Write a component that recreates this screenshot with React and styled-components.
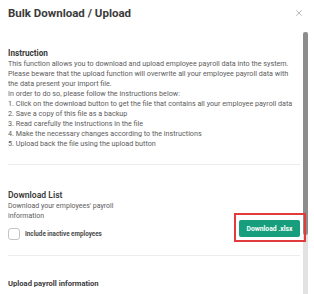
import React from 'react';
import styled, { createGlobalStyle } from 'styled-components';
import { X } from 'lucide-react';

const GlobalStyle = createGlobalStyle`
  html, body {
    margin: 0;
    padding: 0;
    background: #ffffff;
    font-family: Roboto, "Liberation Sans", sans-serif;
  }
`;

const Modal = styled.div`
  width: 314px;
  height: 294px;
  background: #ffffff;
  display: flex;
  flex-direction: column;
  overflow: hidden;
`;

const Header = styled.div`
  height: 32px;
  flex: 0 0 32px;
  display: flex;
  align-items: flex-start;
  justify-content: space-between;
  padding: 6px 10px 0 8px;
  box-sizing: border-box;
`;

const Title = styled.h1`
  margin: 0;
  font-size: 11.5px;
  line-height: 14px;
  font-weight: 700;
  color: #3b3b3b;
`;

const Close = styled.button`
  border: none;
  background: none;
  padding: 0;
  margin-top: 2px;
  display: flex;
  color: #8a8a8a;
  cursor: pointer;
`;

const Content = styled.div`
  flex: 1;
  min-height: 0;
  display: flex;
`;

const Body = styled.div`
  flex: 1;
  min-width: 0;
  padding: 15px 3px 0 8px;
`;

const ScrollTrack = styled.div`
  width: 5px;
  margin-right: 6px;
  background: #e2e2e2;
`;

const ScrollThumb = styled.div`
  height: 203px;
  background: #8c8c8c;
  border-radius: 3px;
`;

const Section = styled.section`
  padding: ${p => p.$pad || '0'};
  border-bottom: ${p => (p.$divider ? '1px solid #ececec' : 'none')};
`;

const Heading = styled.h2`
  margin: 0;
  font-size: ${p => p.$size || '8.2px'};
  line-height: 12px;
  font-weight: ${p => p.$weight || 700};
  color: #3a3a3a;
`;

const Text = styled.p`
  margin: 0;
  font-size: ${p => p.$size || '7px'};
  line-height: 10px;
  color: #5c5c5c;
  white-space: ${p => (p.$nowrap ? 'nowrap' : 'normal')};
`;

const DownloadRow = styled.div`
  display: flex;
  align-items: flex-end;
  justify-content: space-between;
`;

const LeftCol = styled.div`
  width: 120px;
`;

const CheckRow = styled.label`
  display: flex;
  align-items: center;
  gap: 5px;
  margin-top: 7px;
  font-size: 6.3px;
  line-height: 10px;
  font-weight: 700;
  color: #4a4a4a;
`;

const Box = styled.span`
  width: 10px;
  height: 10px;
  border: 1px solid #c4c4c4;
  border-radius: 3px;
  background: #fff;
`;

const ButtonWrap = styled.div`
  position: relative;
  margin-bottom: 3px;

  &::after {
    content: '';
    position: absolute;
    left: -5px;
    right: -6px;
    top: -7px;
    bottom: -5px;
    border: 2px solid #e23b3b;
    pointer-events: none;
  }
`;

const DownloadButton = styled.button`
  display: block;
  width: 61px;
  height: 17px;
  border: none;
  border-radius: 2px;
  background: #179e7c;
  color: #ffffff;
  font-family: Roboto, "Liberation Sans", sans-serif;
  font-size: 6.8px;
  font-weight: 700;
  padding: 0;
  cursor: pointer;
`;

const Spacer = styled.div`
  height: ${p => p.$h}px;
`;

const lines = [
  'This function allows you to download and upload employee payroll data into the system.',
  'Please beware that the upload function will overwrite all your employee payroll data with',
  'the data present your import file.',
  'In order to do so, please follow the instructions below:',
  '1. Click on the download button to get the file that contains all your employee payroll data',
  '2. Save a copy of this file as a backup',
  '3. Read carefully the instructions in the file',
  '4. Make the necessary changes according to the instructions',
  '5. Upload back the file using the upload button',
];

export default function App() {
  return (
    <>
      <GlobalStyle />
      <Modal>
        <Header>
          <Title>Bulk Download / Upload</Title>
          <Close aria-label="close">
            <X size={10} strokeWidth={1.4} />
          </Close>
        </Header>
        <Content>
          <Body>
            <Section $divider $pad="0 0 15px">
              <Heading>Instruction</Heading>
              {lines.map(l => (
                <Text key={l} $size="7.2px" $nowrap>{l}</Text>
              ))}
            </Section>
            <Section $divider $pad="24px 0 15px">
              <DownloadRow>
                <LeftCol>
                  <Heading $size="8.6px" $weight={600}>Download List</Heading>
                  <Text>Download your employees' payroll information</Text>
                  <CheckRow>
                    <Box />
                    Include inactive employees
                  </CheckRow>
                </LeftCol>
                <ButtonWrap>
                  <DownloadButton>Download .xlsx</DownloadButton>
                </ButtonWrap>
              </DownloadRow>
            </Section>
            <Section $pad="22px 0 0">
              <Heading $size="7.6px">Upload payroll information</Heading>
              <Spacer $h={40} />
            </Section>
          </Body>
          <ScrollTrack>
            <ScrollThumb />
          </ScrollTrack>
        </Content>
      </Modal>
    </>
  );
}
